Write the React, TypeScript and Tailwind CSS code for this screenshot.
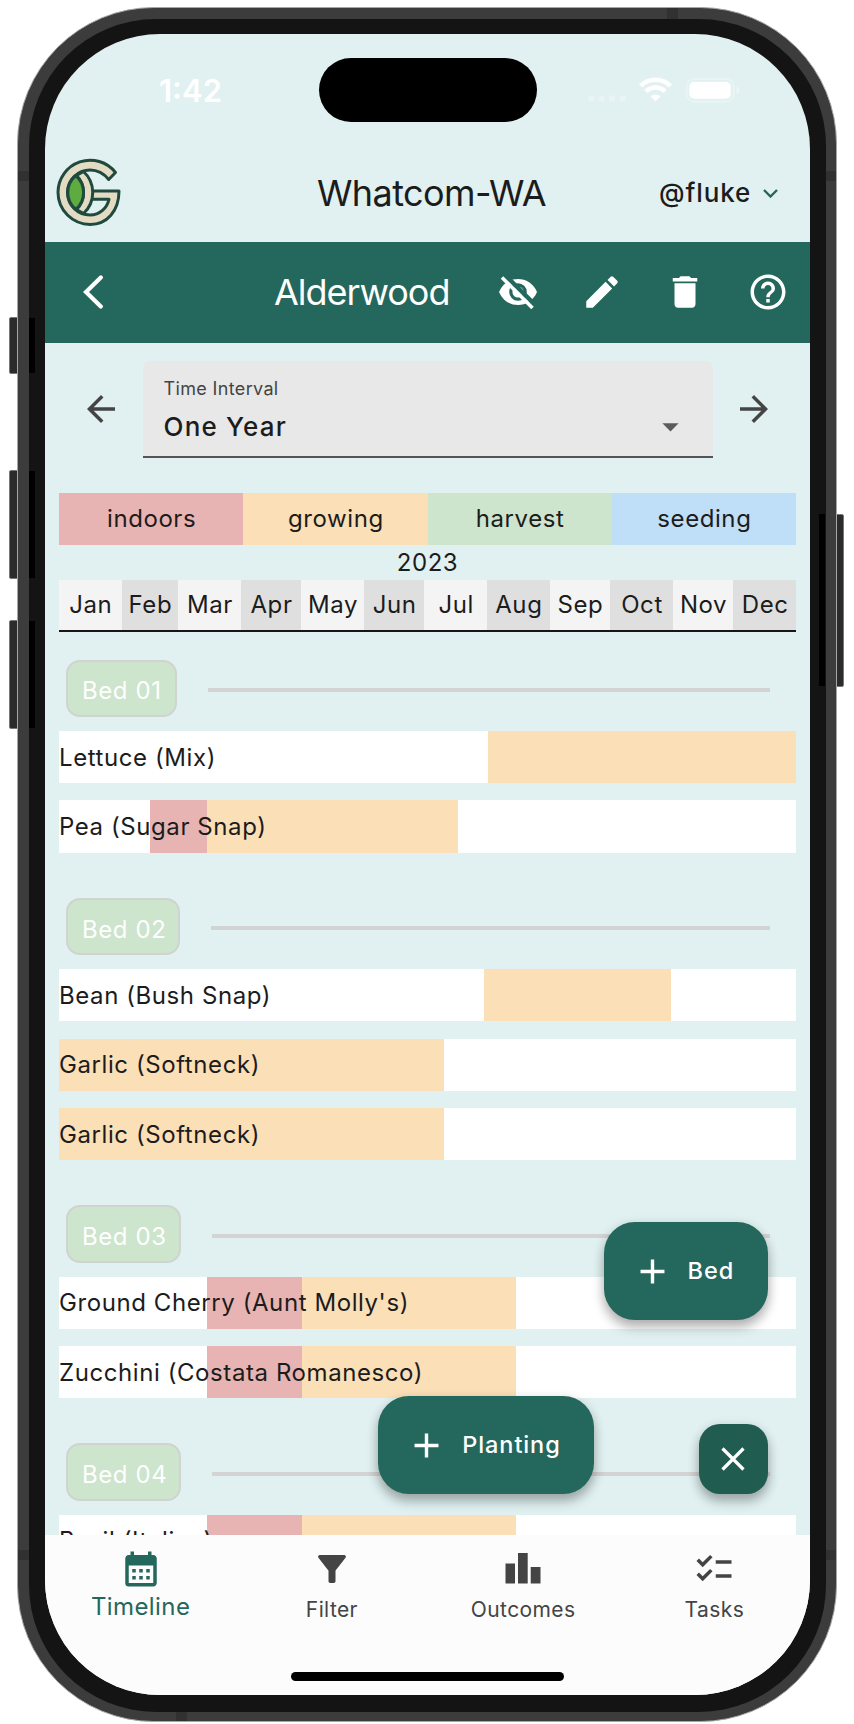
import React from "react";
import {
  MdAdd,
  MdArrowBack,
  MdArrowForward,
  MdArrowDropDown,
  MdCalendarMonth,
  MdChecklist,
  MdDelete,
  MdEdit,
  MdFilterAlt,
  MdHelpOutline,
} from "react-icons/md";

type Stage = "indoors" | "growing" | "harvest" | "seeding";

const stageColor: Record<Stage, string> = {
  indoors: "bg-[#e8b4b3]",
  growing: "bg-[#fbdfb7]",
  harvest: "bg-[#cde4cd]",
  seeding: "bg-[#bfdef8]",
};

const stages: Stage[] = ["indoors", "growing", "harvest", "seeding"];

const months: [string, number][] = [
  ["Jan", 31], ["Feb", 28], ["Mar", 31], ["Apr", 30], ["May", 31], ["Jun", 30],
  ["Jul", 31], ["Aug", 31], ["Sep", 30], ["Oct", 31], ["Nov", 30], ["Dec", 31],
];

const TRACK = 737;

interface Planting {
  name: string;
  spans: [Stage | null, number][];
}

interface Bed {
  name: string;
  chip: string;
  plantings: Planting[];
}

const beds: Bed[] = [
  {
    name: "Bed 01",
    chip: "w-[111px]",
    plantings: [
      { name: "Lettuce (Mix)", spans: [[null, 429], ["growing", 308]] },
      { name: "Pea (Sugar Snap)", spans: [[null, 91], ["indoors", 57], ["growing", 251]] },
    ],
  },
  {
    name: "Bed 02",
    chip: "w-[114px]",
    plantings: [
      { name: "Bean (Bush Snap)", spans: [[null, 425], ["growing", 186.5]] },
      { name: "Garlic (Softneck)", spans: [["growing", 384.7]] },
      { name: "Garlic (Softneck)", spans: [["growing", 384.7]] },
    ],
  },
  {
    name: "Bed 03",
    chip: "w-[115px]",
    plantings: [
      { name: "Ground Cherry (Aunt Molly's)", spans: [[null, 147.7], ["indoors", 95.3], ["growing", 214.5]] },
      { name: "Zucchini (Costata Romanesco)", spans: [[null, 147.7], ["indoors", 95.3], ["growing", 214.5]] },
    ],
  },
  {
    name: "Bed 04",
    chip: "w-[115px]",
    plantings: [
      { name: "Basil (Italian)", spans: [[null, 147.7], ["indoors", 95.3], ["growing", 214.5]] },
    ],
  },
];

function Logo() {
  return (
    <svg viewBox="0 0 80 85" className="h-[85px] w-[80px]" fill="none" stroke="#1f4a3d" strokeWidth="3" strokeLinejoin="round">
      <path
        d="M65.500 22.500 A32.200 32.200 0 0 0 8 42.200 A32.200 32.200 0 0 0 40.200 74.400 C57 74.400 69 61 69 41 L41 41 L41 49.300 L59 49.300 C57 58 50 65 40 65 A22.300 22.300 0 0 1 40 20 C47 20 53.500 23 58.700 29.500 Z"
        fill="#e3dbc3"
      />
      <path d="M26.500 25.500 L33.500 21.500 A28.500 28.500 0 0 1 33.500 63.500 L26.500 59.500 A24 24 0 0 0 26.500 25.500 Z" fill="#e3dbc3" />
      <path d="M25.800 25.500 A22.500 22.500 0 0 1 25.800 59.500 A22 22 0 0 1 25.800 25.500 Z" fill="#5eab40" />
    </svg>
  );
}

function StatusBar() {
  return (
    <div className="flex h-[117px] shrink-0 items-start">
      <div className="w-[273.500px] pt-[37px] pl-[114px] text-[31px] leading-[40px] font-semibold text-white">1:42</div>
      <div className="mt-6 h-16 w-[218.500px] rounded-[34px] bg-black" />
      <svg viewBox="0 0 160 30" className="mt-[41px] ml-[48px] h-[30px] w-[160px]">
        <g fill="#e9f4f4">
          <circle cx="6.300" cy="23.500" r="3.200" />
          <circle cx="16.700" cy="23.500" r="3.200" />
          <circle cx="27.200" cy="23.500" r="3.200" />
          <circle cx="37.700" cy="23.500" r="3.200" />
        </g>
        <g fill="none" stroke="#fff" strokeWidth="4.600">
          <path d="M55.600 10.800 A21.500 21.500 0 0 1 85.400 10.800" />
          <path d="M61 16.400 A13.600 13.600 0 0 1 80 16.400" />
        </g>
        <path d="M70.500 26.500 L65.500 21.300 A7.500 7.500 0 0 1 75.500 21.300 Z" fill="#fff" />
        <rect x="101.700" y="4" width="47" height="22.600" rx="7.500" fill="none" stroke="#ebf5f5" strokeWidth="1.600" />
        <rect x="104.300" y="6.700" width="41.500" height="17" rx="5" fill="#fff" />
        <path d="M151.500 11.500 q3 1 3 3.800 t-3 3.800 Z" fill="#ebf5f5" />
      </svg>
    </div>
  );
}

function EyeOff() {
  return (
    <svg viewBox="0 0 38 34" className="h-[34px] w-[38px]">
      <path d="M0 17 C4 8 11 4 19 4 C27 4 34 8 38 17 C34 26 27 30 19 30 C11 30 4 26 0 17 Z" fill="#fff" />
      <circle cx="19" cy="17" r="7.200" fill="none" stroke="#24675c" strokeWidth="3.200" />
      <path d="M6 0 L37 31" stroke="#24675c" strokeWidth="4.500" />
      <path d="M3 2.500 L33.500 33" stroke="#fff" strokeWidth="3.500" />
    </svg>
  );
}

function TopBars() {
  return (
    <>
      <header className="flex h-[91.300px] shrink-0 items-start">
        <div className="ml-[5px] -mt-px h-[85px] w-[80px]"><Logo /></div>
        <div className="ml-[187px] w-[340px] pt-[20px] text-[36px] leading-[44px] font-[380] tracking-[-0.6px] whitespace-nowrap">Whatcom-WA</div>
        <div className="ml-0.5 flex items-center pt-[26px] text-[26px] leading-8 font-[480]">
          <span className="w-[104px] tracking-[0.9px]">@fluke</span>
          <svg viewBox="0 0 15 9" className="h-[9px] w-[15px]"><path d="M1 1 L7.500 7.500 L14 1" fill="none" stroke="#24675c" strokeWidth="2.400" /></svg>
        </div>
      </header>
      <div className="flex h-[101px] shrink-0 items-center bg-[#24675c] pb-[2px] text-white">
        <svg viewBox="0 0 20 34" className="ml-[38px] h-[34px] w-[20px]"><path d="M17.800 2.500 L3 17 L17.800 31.500" fill="none" stroke="#fff" strokeWidth="4.200" strokeLinecap="round" /></svg>
        <div className="ml-[171px] w-[225px] text-[36px] leading-[44px] font-[380] tracking-[-1px]">Alderwood</div>
        <div className="flex items-center">
          <EyeOff />
          <MdEdit className="ml-[43.500px] size-[42px]" />
          <MdDelete className="ml-[41px] size-[42px]" />
          <MdHelpOutline className="ml-[41px] size-[42px]" />
        </div>
      </div>
    </>
  );
}

function IntervalPicker() {
  return (
    <div className="flex h-[97px] items-center text-[#444]">
      <MdArrowBack className="mb-px ml-[35px] size-[42px]" />
      <div className="ml-[20.500px] flex h-[97px] w-[570px] items-start justify-between rounded-t-[7px] border-b-2 border-[#55535a] bg-[#e8e8e8]">
        <div className="pt-[16px] pl-[21px]">
          <div className="text-[18px] leading-6 tracking-[0.35px]">Time Interval</div>
          <div className="mt-[10.500px] text-[26px] leading-8 font-medium tracking-[1.200px] text-[#1c1c1c]">One Year</div>
        </div>
        <MdArrowDropDown className="mt-[46px] mr-[22.500px] size-[39px] text-[#5c5c5c]" />
      </div>
      <MdArrowForward className="mb-px ml-[20px] size-[42px]" />
    </div>
  );
}

function Legend() {
  return (
    <div className="flex h-[52px]">
      {stages.map((s) => (
        <div key={s} className={`flex flex-1 items-center justify-center pl-px ${stageColor[s]}`}>{s}</div>
      ))}
    </div>
  );
}

function Months() {
  return (
    <div className="flex h-[52px] border-b-2 border-[#161616]">
      {months.map(([m, days], i) => (
        <div
          key={m}
          className={`flex items-center justify-center pt-px pl-px ${i % 2 ? "bg-[#dfdfdf]" : "bg-[#f4f4f4]"}`}
          style={{ width: (TRACK * days) / 365 }}
        >
          {m}
        </div>
      ))}
    </div>
  );
}

function Row({ planting }: { planting: Planting }) {
  return (
    <div className="relative h-[52.300px] bg-white">
      <div className="flex h-full">
        {planting.spans.map(([stage, width], i) => (
          <div key={i} className={stage ? stageColor[stage] : ""} style={{ width }} />
        ))}
      </div>
      <div className="absolute inset-0 flex items-center pt-px whitespace-nowrap">{planting.name}</div>
    </div>
  );
}

function BedSection({ bed }: { bed: Bed }) {
  return (
    <section className="mb-[45px]">
      <div className="flex h-[57.500px] items-center pl-[7px]">
        <div className={`flex h-full items-center rounded-[14px] border-2 border-[#d0d3d0] bg-[#cde4cd] pt-[6px] pl-[14px] text-white ${bed.chip}`}>
          {bed.name}
        </div>
        <div className="mt-[3px] mr-[26px] ml-[31px] h-[4px] flex-1 bg-[#d3d3d3]" />
      </div>
      <div className="mt-[13.800px] flex flex-col gap-[17.200px]">
        {bed.plantings.map((p, i) => <Row key={i} planting={p} />)}
      </div>
    </section>
  );
}

const shadow = "shadow-[0_8px_12px_rgba(0,0,0,0.22),0_3px_12px_rgba(0,0,0,0.16)]";

function Fabs() {
  return (
    <div className="absolute top-[1188.300px] left-[333.300px] flex w-[390px] flex-col text-[23.500px] tracking-[0.9px] text-white">
      <div className={`flex h-[97.700px] w-[164.700px] items-center self-end rounded-[31px] bg-[#24675c] pl-[28px] font-[450] ${shadow}`}>
        <MdAdd className="size-[41px]" /><span className="ml-[15px]">Bed</span>
      </div>
      <div className="mt-[76.300px] flex items-end justify-between">
        <div className={`flex h-[97.500px] w-[215.700px] items-center rounded-[31px] bg-[#24675c] pl-[28px] font-[450] ${shadow}`}>
          <MdAdd className="size-[41px]" /><span className="ml-[15px]">Planting</span>
        </div>
        <div className={`flex h-[70px] w-[69.700px] items-center justify-center rounded-[21px] bg-[#215c51] ${shadow}`}>
          <svg viewBox="0 0 24 24" className="size-6"><path d="M1.500 1.500 L22.500 22.500 M22.500 1.500 L1.500 22.500" stroke="#fff" strokeWidth="3.200" /></svg>
        </div>
      </div>
    </div>
  );
}

function BottomNav() {
  return (
    <nav className="absolute inset-x-0 bottom-0 h-[160.500px] bg-[#fcfcfc] text-[#444]">
      <div className="grid h-[100px] grid-cols-4 text-[21px] tracking-[0.4px]">
        <div className="flex flex-col items-center pt-[13px] text-[#24675c]">
          <MdCalendarMonth className="size-[42px]" />
          <div className="mt-[2.500px] text-[24px] leading-[30px]">Timeline</div>
        </div>
        <div className="flex flex-col items-center pt-[13px]">
          <MdFilterAlt className="size-[42px]" />
          <div className="mt-[7.500px] leading-[26px]">Filter</div>
        </div>
        <div className="flex flex-col items-center pt-[13px]">
          <svg viewBox="0 0 36 42" className="h-[42px] w-[36px]" fill="#444"><path d="M.5 15.500h9.500v20H.5zM13 5h9.700v30.500H13zM25.700 19h9.800v16.500h-9.800z" /></svg>
          <div className="mt-[7.500px] leading-[26px]">Outcomes</div>
        </div>
        <div className="flex flex-col items-center pt-[13px]">
          <MdChecklist className="size-[42px]" />
          <div className="mt-[7.500px] leading-[26px]">Tasks</div>
        </div>
      </div>
      <div className="mx-auto mt-[37px] h-[9px] w-[273.500px] rounded-full bg-black" />
    </nav>
  );
}

function SideButton({ className }: { className: string }) {
  return <div className={`absolute w-[26px] rounded-[2px] border border-[#777] bg-[#2b2b2b] ${className}`} />;
}

function InnerNotch({ className }: { className: string }) {
  return <div className={`absolute bg-black ${className}`} />;
}

function Band({ className }: { className: string }) {
  return <div className={`absolute bg-[#313131] ${className}`} />;
}

export default function App() {
  return (
    <div className="relative h-[1724px] w-[854px] overflow-hidden bg-white font-[Inter,sans-serif] text-[24px] leading-[30px] text-[#1c1c1c]">
      <SideButton className="top-[317px] left-[9px] h-[57px]" />
      <SideButton className="top-[470px] left-[9px] h-[109px]" />
      <SideButton className="top-[620px] left-[9px] h-[109px]" />
      <SideButton className="top-[514px] left-[818px] h-[173px]" />
      <div className="absolute top-[7px] left-[17px] h-[1715px] w-[820px] rounded-[137px] border border-[#a6a6a6] bg-[#3c3c3c]" />
      <Band className="top-[171px] left-[18px] h-[10px] w-[818px]" />
      <Band className="top-[1550px] left-[18px] h-[10px] w-[818px]" />
      <Band className="top-2 left-[667px] h-3 w-[11px]" />
      <Band className="top-[1709px] left-[176px] h-3 w-[11px]" />
      <div className="absolute top-[18.500px] left-[28.500px] h-[1693px] w-[797px] rounded-[127px] bg-[#141414]" />
      <InnerNotch className="top-[318px] left-[28.500px] h-[55px] w-[6px]" />
      <InnerNotch className="top-[471px] left-[28.500px] h-[107px] w-[6px]" />
      <InnerNotch className="top-[621px] left-[28.500px] h-[107px] w-[6px]" />
      <InnerNotch className="top-[514px] left-[819px] h-[172px] w-[6px]" />
      <main className="absolute top-[34px] left-[45px] h-[1661px] w-[765px] overflow-hidden rounded-[115px] bg-[#e1f1f1]">
        <StatusBar />
        <TopBars />
        <div className="pt-[17.700px]"><IntervalPicker /></div>
        <div className="mt-[35px] ml-[14px] w-[737px] tracking-[0.58px]">
          <Legend />
          <div className="h-[35px] pt-[3.500px] text-center">2023</div>
          <Months />
          <div className="mt-[27.700px]">
            {beds.map((b) => <BedSection key={b.name} bed={b} />)}
          </div>
        </div>
        <BottomNav />
        <Fabs />
      </main>
    </div>
  );
}
